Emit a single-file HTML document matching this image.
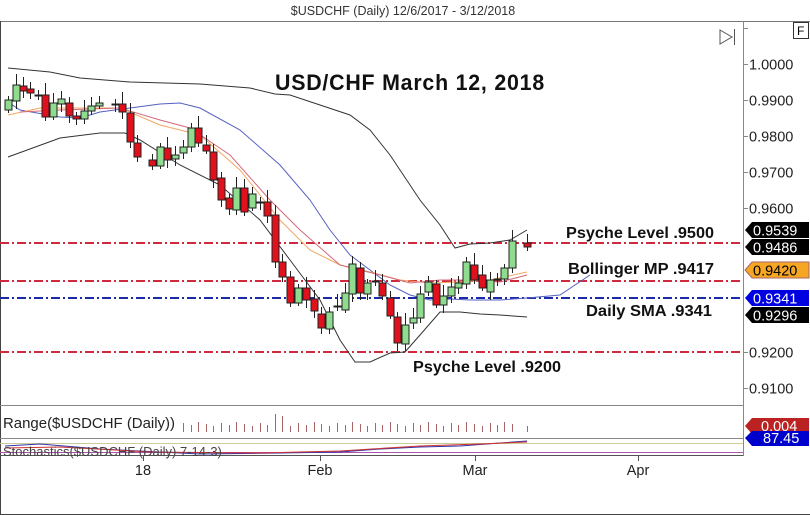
<!DOCTYPE html>
<html><head><meta charset="utf-8"><style>
html,body{margin:0;padding:0;background:#fff;}
body{width:810px;height:515px;overflow:hidden;position:relative;font-family:"Liberation Sans",sans-serif;}
</style></head><body>
<svg width="810" height="515" xmlns="http://www.w3.org/2000/svg" style="position:absolute;left:0;top:0" font-family="Liberation Sans, sans-serif">
<rect x="0" y="0" width="810" height="515" fill="#fff"/>
<text x="403" y="15" font-size="12.5" fill="#333" text-anchor="middle">$USDCHF (Daily)  12/6/2017 - 3/12/2018</text>
<line x1="0" y1="21.5" x2="810" y2="21.5" stroke="#777"/>
<line x1="0.5" y1="21" x2="0.5" y2="515" stroke="#444"/>
<line x1="0" y1="514.5" x2="810" y2="514.5" stroke="#444"/>
<line x1="743.5" y1="21" x2="743.5" y2="456" stroke="#888"/>
<line x1="0" y1="405.5" x2="743" y2="405.5" stroke="#888"/>
<line x1="0" y1="438.5" x2="743" y2="438.5" stroke="#888"/>
<line x1="0" y1="455.5" x2="743" y2="455.5" stroke="#555"/>
<line x1="0" y1="443.5" x2="743" y2="443.5" stroke="#cc9"/>
<line x1="0" y1="452.5" x2="743" y2="452.5" stroke="#a5a"/>
<rect x="793.5" y="22.5" width="15" height="16" fill="#fff" stroke="#333"/>
<text x="797" y="35" font-size="12" fill="#000">F</text>
<path d="M720 30 L732 37 L720 44 Z" fill="none" stroke="#555"/>
<line x1="734.5" y1="29" x2="734.5" y2="45" stroke="#555"/>
<g font-size="14.5" fill="#222">
<line x1="743" y1="28.5" x2="748" y2="28.5" stroke="#888"/>
<g stroke="#888">
<line x1="743" y1="64.5" x2="748" y2="64.5"/><line x1="743" y1="100.5" x2="748" y2="100.5"/><line x1="743" y1="136.5" x2="748" y2="136.5"/><line x1="743" y1="172.5" x2="748" y2="172.5"/><line x1="743" y1="208.5" x2="748" y2="208.5"/><line x1="743" y1="352.5" x2="748" y2="352.5"/><line x1="743" y1="388.5" x2="748" y2="388.5"/>
</g>
<text x="749" y="69.5">1.0000</text><text x="749" y="105.5">0.9900</text><text x="749" y="141.5">0.9800</text><text x="749" y="177.5">0.9700</text><text x="749" y="213.5">0.9600</text><text x="749" y="357.5">0.9200</text><text x="749" y="393.5">0.9100</text>
</g>
<!-- tags -->
<g font-size="14.5">
<path d="M752 222 H809 V238 H752 L745 230 Z" fill="#000"/><text x="753" y="235.5" fill="#fff">0.9539</text>
<path d="M752 239 H809 V255 H752 L745 247 Z" fill="#000"/><text x="753" y="252.5" fill="#fff">0.9486</text>
<path d="M752 262 H809 V278 H752 L745 270 Z" fill="#f5a623" stroke="#a66" /><text x="753" y="275.5" fill="#000">0.9420</text>
<path d="M752 290 H809 V306 H752 L745 298 Z" fill="#0000e0"/><text x="753" y="303.5" fill="#fff">0.9341</text>
<path d="M752 307 H809 V323 H752 L745 315 Z" fill="#000"/><text x="753" y="320.5" fill="#fff">0.9296</text>
<path d="M752 418 H809 V434 H752 L745 426 Z" fill="#b22"/><text x="761" y="431" fill="#fff">0.004</text>
<path d="M752 431 H809 V446 H752 L745 438 Z" fill="#00c"/><text x="763" y="443" fill="#fff">87.45</text>
</g>
<!-- level lines -->
<g stroke-width="2" stroke-dasharray="9,3,2,3">
<line x1="0" y1="243" x2="743" y2="243" stroke="#d0283c"/>
<line x1="0" y1="281" x2="743" y2="281" stroke="#d0283c"/>
<line x1="0" y1="352" x2="743" y2="352" stroke="#d0283c"/>
<line x1="0" y1="298" x2="743" y2="298" stroke="#1a2aa8"/>
</g>
<!-- bands -->
<g fill="none" stroke-width="1">
<polyline stroke="#333" points="8,68 50,72 80,78 130,82 200,84 250,88 275,94 290,95 320,105 350,115 370,130 390,155 420,200 440,225 455,248 470,244 490,243 510,240 527,230"/>
<polyline stroke="#333" points="8,157 60,138 100,133 125,133 140,140 180,165 220,185 260,220 290,260 320,300 340,340 355,362 370,362 390,353 405,352 420,335 440,312 460,312 480,314 500,315 527,317"/>
<polyline stroke="#5560c0" points="8,102 20,110 60,117 80,118 100,112 130,108 160,104 180,103 200,108 240,130 280,165 310,200 330,230 350,255 370,270 390,285 410,295 430,300 450,299 470,300 500,300 527,298 560,295 590,275"/>
<polyline stroke="#f0a860" points="8,115 40,108 120,108 160,125 200,135 240,170 280,220 310,250 340,265 370,272 400,280 430,283 460,282 490,280 527,272"/>
<polyline stroke="#d46a7a" points="20,112 60,110 120,108 160,120 190,128 230,155 270,200 300,230 340,265 380,275 410,283 440,280 470,280 500,282 527,275"/>
</g>
<g id="c" stroke="#222" stroke-width="1"></g>
<g font-weight="bold" fill="#111">
<text x="275" y="90" font-size="22" letter-spacing="0.8" textLength="270" lengthAdjust="spacingAndGlyphs">USD/CHF March 12, 2018</text>
<text x="566" y="238" font-size="16" textLength="148" lengthAdjust="spacingAndGlyphs">Psyche Level .9500</text>
<text x="568" y="274" font-size="16" textLength="146" lengthAdjust="spacingAndGlyphs">Bollinger MP .9417</text>
<text x="586" y="316" font-size="16" textLength="126" lengthAdjust="spacingAndGlyphs">Daily SMA .9341</text>
<text x="413" y="372" font-size="16" textLength="148" lengthAdjust="spacingAndGlyphs">Psyche Level .9200</text>
</g>
<text x="3" y="428" font-size="15" fill="#222" textLength="172" lengthAdjust="spacingAndGlyphs">Range($USDCHF (Daily))</text>
<g id="r" stroke="#a66"></g>
<polyline fill="none" stroke="#33a" points="5,446 40,444 100,449 200,454 280,453 340,452 380,449 420,447 460,446 500,443 527,441"/>
<polyline fill="none" stroke="#c33" points="5,448 60,447 150,452 260,453 340,451 420,446 480,444 527,442"/>
<text x="3" y="456" font-size="13" fill="#444">Stochastics($USDCHF (Daily) 7-14-3)</text>
<g stroke="#555"><line x1="143.5" y1="456" x2="143.5" y2="461"/><line x1="320.5" y1="456" x2="320.5" y2="461"/><line x1="475.5" y1="456" x2="475.5" y2="461"/><line x1="638.5" y1="456" x2="638.5" y2="461"/></g>
<g font-size="14.5" fill="#222" text-anchor="middle">
<text x="143" y="475">18</text><text x="320" y="475">Feb</text><text x="475" y="475">Mar</text><text x="638" y="475">Apr</text>
</g>
</svg>
<script>
var d=[[8,110,100],[16,101,85],[23,86,91],[30,89,93],[38,95,95],[45,95,117],[53,117,103],[61,104,99],[69,103,116],[76,116,119],[84,119,111],[91,111,106],[99,106,103],[115,104,104],[122,104,112],[130,113,142],[137,143,157],[152,160,166],[160,166,147],[167,148,160],[175,159,155],[183,153,147],[191,147,128],[198,128,143],[206,145,151],[213,152,180],[221,178,200],[229,198,209],[236,210,188],[244,188,212],[252,208,194],[260,202,202],[267,202,216],[275,215,262],[282,262,277],[290,277,303],[298,303,288],[306,288,300],[314,299,311],[321,314,328],[329,329,312],[337,306,307],[345,310,293],[352,294,264],[360,268,293],[367,294,283],[375,281,281],[382,283,296],[390,298,316],[397,317,343],[405,344,325],[413,323,318],[420,318,294],[428,292,282],[436,284,305],[443,305,296],[451,296,287],[458,288,283],[466,284,262],[474,265,280],[482,275,288],[490,292,280],[497,279,279],[504,279,268],[512,268,241],[527,243,247]];
var g=document.getElementById('c'),r=document.getElementById('r'),s='',t='';
d.forEach(function(a,i){var x=a[0],o=a[1],c=a[2],top=Math.min(o,c),b=Math.max(o,c),up=c<o;
var h=4+(i*7%9);s+='<line x1="'+(x+0.5)+'" y1="'+(top-h)+'" x2="'+(x+0.5)+'" y2="'+(b+3+(i*5%6))+'"/>';
s+='<rect x="'+(x-3)+'" y="'+top+'" width="7" height="'+Math.max(1,b-top)+'" fill="'+(up?'#8fdc8f':'#e0101c')+'"/>';
if(x>180){var hh=6+(i*3%5)+(x>270&&x<290?8:0);t+='<line x1="'+(x+0.5)+'" y1="'+(432-hh)+'" x2="'+(x+0.5)+'" y2="432"/>';}});
g.innerHTML=s;r.innerHTML=t;
</script>
</body></html>
